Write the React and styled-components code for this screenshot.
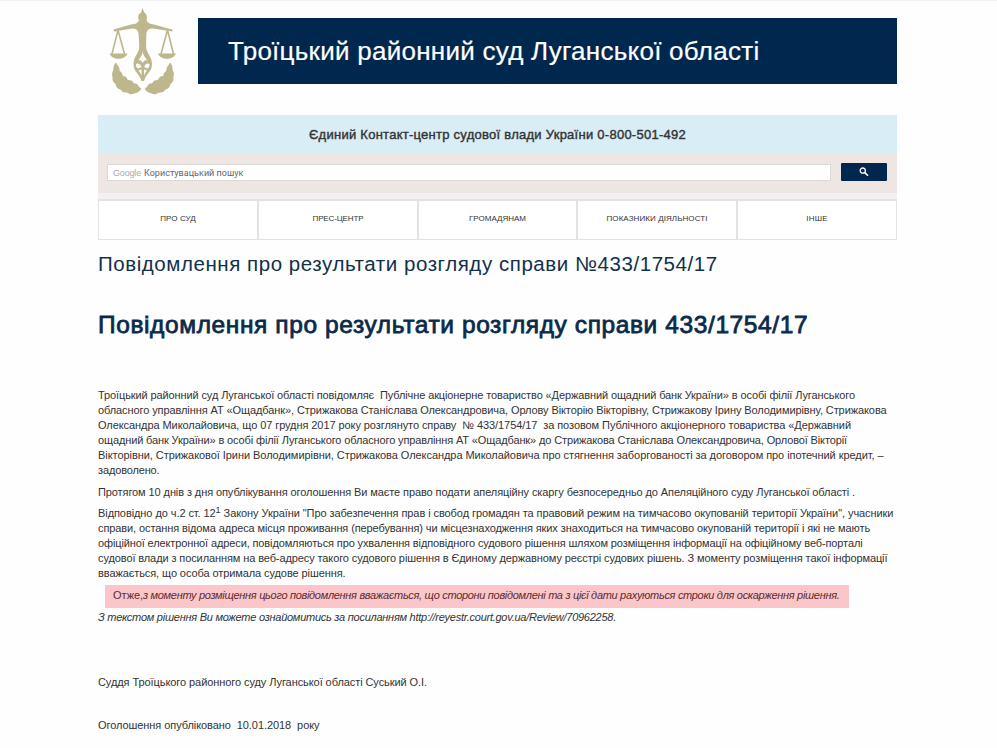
import React from "react";
import styled, { createGlobalStyle } from "styled-components";

const GlobalStyle = createGlobalStyle`
  * { box-sizing: border-box; }
  body {
    margin: 0;
    background: #fefefe;
    font-family: "Liberation Sans", Arial, sans-serif;
    color: #333;
  }
`;

const Page = styled.div`
  height: 748px;
  overflow: hidden;
  border-top: 1px solid #f1f1f1;
  padding-left: 98px;
`;

const Column = styled.div`
  width: 799px;
  display: flex;
  flex-direction: column;
`;

const Header = styled.header`
  display: flex;
  height: 114px;
`;

const LogoBox = styled.div`
  width: 100px;
  height: 110px;
`;

const CourtName = styled.div`
  flex: 1;
  height: 66px;
  margin-top: 17px;
  padding-left: 30px;
  background: #00274e;
  color: #fff;
  font-size: 26px;
  line-height: 66px;
  letter-spacing: 0.26px;
  -webkit-text-stroke: 0.2px #fff;
  white-space: nowrap;
`;

const ContactBar = styled.div`
  height: 39px;
  background: #d9edf7;
  text-align: center;
  font-size: 13px;
  line-height: 39px;
  letter-spacing: 0.261px;
  -webkit-text-stroke: 0.4px #333;
`;

const SearchBar = styled.div`
  display: flex;
  align-items: flex-start;
  gap: 10px;
  height: 39px;
  padding: 9px 10px 0 9px;
  background: #ede6e2;
`;

const SearchField = styled.div`
  flex: 1;
  display: flex;
  align-items: center;
  gap: 3px;
  height: 17px;
  margin-top: 1px;
  padding-left: 5px;
  border: 1px solid #ddd9d7;
  background: #fff;
  white-space: nowrap;
`;

const Brand = styled.span`
  width: 28px;
  font-size: 9px;
  letter-spacing: -0.17px;
  color: #aaa;
`;

const Placeholder = styled.span`
  font-family: Roboto, "Liberation Sans", sans-serif;
  font-size: 9px;
  letter-spacing: 0.03px;
  color: #666;
`;

const SearchButton = styled.button`
  display: flex;
  align-items: center;
  justify-content: center;
  width: 46px;
  height: 18px;
  padding: 0;
  border: 0;
  border-radius: 1px;
  background: #00274e;
`;

const Nav = styled.nav`
  display: grid;
  grid-template-columns: 161px 160px 159px 160px 159px;
  height: 47px;
  border-top: 6px solid #f2f0f0;
`;

const NavItem = styled.a`
  display: block;
  height: 41px;
  border: 1px solid #e2e2e2;
  border-top: 2px solid #e5e2e2;
  border-left-width: ${(p) => (p.$first ? "1px" : "0")};
  border-right-width: ${(p) => (p.$last ? "1px" : "2px")};
  background: #fff;
  text-align: center;
  font-size: 8px;
  line-height: 36px;
  letter-spacing: ${(p) => p.$track}px;
  white-space: nowrap;
`;

const Title = styled.h1`
  margin: 9px 0 0;
  height: 30px;
  font-size: 20.5px;
  line-height: 30px;
  font-weight: 400;
  letter-spacing: 0.555px;
  color: #12304c;
  white-space: nowrap;
`;

const Subtitle = styled.h2`
  margin: 30px 0 0;
  height: 32px;
  font-size: 24.5px;
  line-height: 32px;
  font-weight: 400;
  letter-spacing: 0.6px;
  color: #0b2a4a;
  -webkit-text-stroke: 0.8px #0b2a4a;
  white-space: nowrap;
`;

const Article = styled.article`
  margin-top: 47px;
  font-size: 11px;
  line-height: 15px;
`;

const Paragraph = styled.p`
  margin: ${(p) => p.$before ?? 0}px 0 ${(p) => p.$after ?? 0}px;
`;

const Line = styled.span`
  display: block;
  height: 15px;
  white-space: pre;
  letter-spacing: ${(p) => p.$track}px;
`;

const Sup = styled.sup`
  display: inline-block;
  width: 5px;
  font-size: 9px;
  line-height: 0;
  vertical-align: 4px;
`;

const Highlight = styled.p`
  width: 744px;
  height: 23px;
  margin: 0 0 0 7px;
  padding: 3px 0 0 8px;
  background: #fac6c9;
  color: #5c2b2e;
  white-space: nowrap;
  letter-spacing: -0.1px;
`;

const Emphasis = styled.em`
  letter-spacing: ${(p) => p.$track}px;
`;

const NAV = [
  ["ПРО СУД", 0.069],
  ["ПРЕС-ЦЕНТР", -0.113],
  ["ГРОМАДЯНАМ", 0],
  ["ПОКАЗНИКИ ДІЯЛЬНОСТІ", 0.079],
  ["ІНШЕ", 0.2],
];

const CLAIM = [
  ["Троїцький районний суд Луганської області повідомляє  Публічне акціонерне товариство «Державний ощадний банк України» в особі філії Луганського", -0.111],
  ["обласного управління АТ «Ощадбанк», Стрижакова Станіслава Олександровича, Орлову Вікторію Вікторівну, Стрижакову Ірину Володимирівну, Стрижакова", -0.089],
  ["Олександра Миколайовича, що 07 грудня 2017 року розглянуто справу  № 433/1754/17  за позовом Публічного акціонерного товариства «Державний", -0.076],
  ["ощадний банк України» в особі філії Луганського обласного управління АТ «Ощадбанк» до Стрижакова Станіслава Олександровича, Орлової Вікторії", -0.126],
  ["Вікторівни, Стрижакової Ірини Володимирівни, Стрижакова Олександра Миколайовича про стягнення заборгованості за договором про іпотечний кредит, –", -0.059],
  ["задоволено.", -0.143],
];

const LAW = [
  ["справи, остання відома адреса місця проживання (перебування) чи місцезнаходження яких знаходиться на тимчасово окупованій території і які не мають", -0.103],
  ["офіційної електронної адреси, повідомляються про ухвалення відповідного судового рішення шляхом розміщення інформації на офіційному веб-порталі", -0.123],
  ["судової влади з посиланням на веб-адресу такого судового рішення в Єдиному державному реєстрі судових рішень. З моменту розміщення такої інформації", -0.102],
  ["вважається, що особа отримала судове рішення.", -0.089],
];

const Lines = ({ items }) =>
  items.map(([text, track]) => (
    <Line key={text} $track={track}>{text}</Line>
  ));

const Branch = () => (
  <path d="M18 62.500C14.500 66 16 69 15 71C13 74 15 77 14.500 79C14.500 82 17 83 18 85C18 88 21 89 23 90C25 93 28 92.500 30 93C33 95.500 36 93.500 38 93C41 92.500 42 90 43.500 89C42 87 41 87.500 40.500 86C39 82.500 37 84 35.500 83C34 79 31 81 29.500 79.500C28.500 75.500 26 77 24.500 75.500C24.500 72 22 72 21.500 70C22 67 19.500 66 18 62.500Z" />
);

const Emblem = () => (
  <svg width="100" height="110" viewBox="0 1 100 110" fill="#beb78d">
    <path d="M44.500 8L46.300 12.500C49 14 49.500 17 48.500 20C49.500 23 52 24 56 24.500L72 29C74 28.500 75 30 74.500 31.500L55 28.500C50 28 48.500 31 48.300 35L48 51H41.500L40.700 35C40.500 31 39 28 34 28.500L17 31.500C15 31.500 15 29 17 29L33 24.500C38 24 40 23 41 20C39.500 17 40 14 43 12.500Z" />
    <path
      fillRule="evenodd"
      d="M41.500 46H48C48 53 54 56 54 64C54 72 48.500 73 46 81H43.500C41 73 35.500 72 35.500 64C35.500 56 41.500 53 41.500 46ZM44.800 51C44.500 56 42 57 40.500 60.500C42.500 59.500 44 61 44.800 63C45.500 61 47 59.500 49 60.500C47.500 57 45 56 44.800 51ZM38 64C38 67 39 68 40 68.500L43.500 67C42.500 64.500 40.500 62.500 38 64ZM51.500 64C51.500 67 50.500 68 49.500 68.500L46 67C47 64.500 49 62.500 51.500 64ZM40.500 70.500C41.500 72.500 43 73.500 43.500 76V69.500ZM49 70.500C48 72.500 46.500 73.500 46 76V69.500Z"
    />
    <path d="M20 30L14 54M20 30L26.500 54M69.500 30L63 54M69.500 30L75.500 54" fill="none" stroke="#beb78d" strokeWidth="1.600" />
    <path d="M11.500 53.500H29.500C27 60.500 14 60.500 11.500 53.500ZM60 53.500H78C75.500 60.500 62.500 60.500 60 53.500Z" />
    <Branch />
    <g transform="translate(90 0) scale(-1 1)"><Branch /></g>
  </svg>
);

const SearchIcon = () => (
  <svg width="10" height="10" viewBox="0 0 10 10" fill="none" stroke="#fff">
    <circle cx="3.800" cy="3.600" r="2.600" strokeWidth="1.300" />
    <path d="M5.800 5.600L9 8.800" strokeWidth="1.600" />
  </svg>
);

export default function App() {
  return (
    <Page>
      <GlobalStyle />
      <Column>
        <Header>
          <LogoBox><Emblem /></LogoBox>
          <CourtName>Троїцький районний суд Луганської області</CourtName>
        </Header>
        <ContactBar>Єдиний Контакт-центр судової влади України 0-800-501-492</ContactBar>
        <SearchBar>
          <SearchField>
            <Brand>Google</Brand>
            <Placeholder>Користувацький пошук</Placeholder>
          </SearchField>
          <SearchButton aria-label="Пошук"><SearchIcon /></SearchButton>
        </SearchBar>
        <Nav>
          {NAV.map(([label, track], i) => (
            <NavItem key={label} $track={track} $first={i === 0} $last={i === NAV.length - 1}>
              {label}
            </NavItem>
          ))}
        </Nav>
        <Title>Повідомлення про результати розгляду справи №433/1754/17</Title>
        <Subtitle>Повідомлення про результати розгляду справи 433/1754/17</Subtitle>
        <Article>
          <Paragraph $after={7}><Lines items={CLAIM} /></Paragraph>
          <Paragraph $after={6}>
            <Line $track={-0.094}>
              Протягом 10 днів з дня опублікування оголошення Ви маєте право подати апеляційну скаргу безпосередньо до Апеляційного суду Луганської області .
            </Line>
          </Paragraph>
          <Paragraph $after={4}>
            <Line $track={-0.077}>
              Відповідно до ч.2 ст. 12<Sup>1</Sup>{' Закону України "Про забезпечення прав і свобод громадян та правовий режим на тимчасово окупованій території України", учасники'}
            </Line>
            <Lines items={LAW} />
          </Paragraph>
          <Highlight>
            Отже,
            <Emphasis $track={-0.309}>
              з моменту розміщення цього повідомлення вважається, що сторони повідомлені та з цієї дати рахуються строки для оскарження рішення.
            </Emphasis>
          </Highlight>
          <Paragraph $before={2} $after={50}>
            <Line $track={-0.257}>
              <em>З текстом рішення Ви можете ознайомитись за посиланням http://reyestr.court.gov.ua/Review/70962258.</em>
            </Line>
          </Paragraph>
          <Paragraph $after={28}>
            <Line $track={-0.076}>Суддя Троїцького районного суду Луганської області Суський О.І.</Line>
          </Paragraph>
          <Paragraph>
            <Line $track={-0.07}>{"Оголошення опубліковано  10.01.2018  року"}</Line>
          </Paragraph>
        </Article>
      </Column>
    </Page>
  );
}
